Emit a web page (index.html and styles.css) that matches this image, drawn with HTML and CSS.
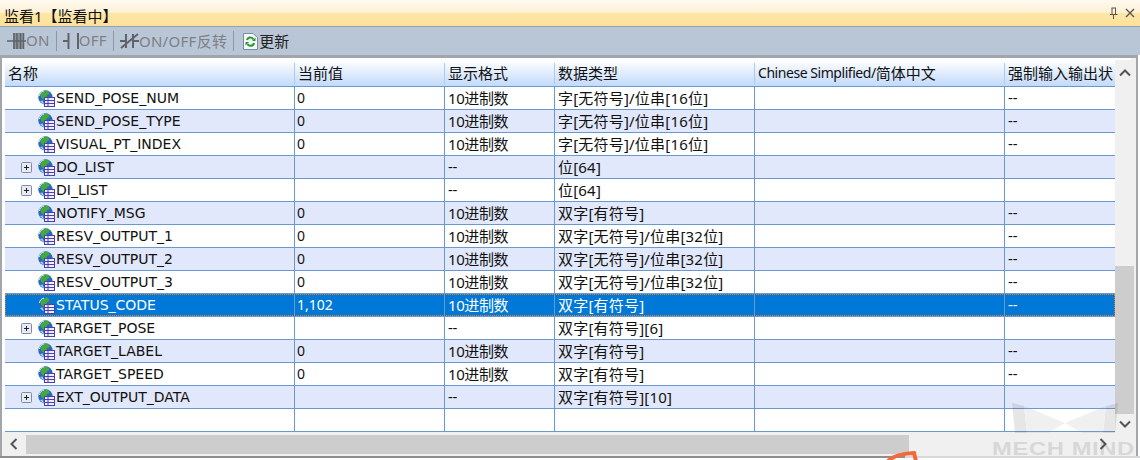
FILE: index.html
```html
<!DOCTYPE html>
<html lang="zh-CN">
<head>
  <meta charset="UTF-8" />
  <title>监看1</title>
  <link rel="stylesheet" href="styles.css">
</head>
<body>
<svg class="defs" width="0" height="0">
  <defs>
    <symbol id="var-icon" viewBox="0 0 17 17">
      <circle cx="7.5" cy="7.5" r="7.2" fill="#2a68c0"/>
      <path d="M2.5 4 C4.5 1 8 0 10.5 1 L11.5 4 L8.5 5.5 L9 8 L5.5 10 L3 7.5 Z" fill="#45a83c"/>
      <path d="M2 11 L4.5 10.5 L6 14 L4.5 13.5 Z" fill="#9fd0f5"/>
      <path d="M1.5 6 C1.5 3.5 3.5 1.5 6 1" fill="none" stroke="#d6ecff" stroke-width="1"/>
      <rect x="6.5" y="7.5" width="10" height="9" fill="#eeecff" stroke="#4a3fb0"/>
      <path d="M6.5 10.5 H16.5 M6.5 13.5 H16.5 M10 7.5 V16.5" stroke="#4a3fb0" stroke-width="1"/>
    </symbol>
    <symbol id="plus-box" viewBox="0 0 11 11">
      <rect x="0.5" y="0.5" width="10" height="10" rx="1" fill="#e6ebf5" stroke="#7f8ba0"/>
      <path d="M3 5.5 H8 M5.5 3 V8" stroke="#222" stroke-width="1"/>
    </symbol>
  </defs>
</svg>

<div class="titlebar">
  <span class="title">监看1【监看中】</span>
  <span class="win-btns">
    <svg width="11" height="12" viewBox="0 0 11 12"><path d="M3.5 1 H8 M4 1 V7 M7.5 1 V7 M2 7.5 H9.5 M5.5 8 V12" fill="none" stroke="#555" stroke-width="1"/></svg>
    <svg width="10" height="10" viewBox="0 0 10 10"><path d="M1 1 L9 9 M9 1 L1 9" stroke="#555" stroke-width="1.3"/></svg>
  </span>
</div>

<div class="toolbar">
  <span class="tool off">
    <svg width="19" height="18" viewBox="0 0 19 18"><rect x="6" y="1" width="10" height="16" fill="#8d929a"/><path d="M0 9 H19 M7 1 V17 M10 1 V17 M13.5 1 V17 M16.5 1 V17" stroke="#5f636a" stroke-width="1.5" fill="none"/></svg><span class="tool-text">ON</span>
  </span>
  <i class="sep"></i>
  <span class="tool off">
    <svg width="16" height="18" viewBox="0 0 16 18"><path d="M0 9 H5 M5.5 1 V17 M15 1 V17" stroke="#5f636a" stroke-width="2" fill="none"/></svg><span class="tool-text">OFF</span>
  </span>
  <i class="sep"></i>
  <span class="tool off">
    <svg width="19" height="18" viewBox="0 0 19 18"><path d="M0 9 H5 M6 2 V16 M13 2 V16 M13 9 H19 M1 16 L18 2" stroke="#5f636a" stroke-width="2" fill="none"/></svg><span class="tool-text">ON/OFF反转</span>
  </span>
  <i class="sep"></i>
  <span class="tool refresh">
    <svg width="15" height="17" viewBox="0 0 15 17"><path d="M0.5 0.5 H10 L14.5 4.5 V16.5 H0.5 Z" fill="#f4f7fb" stroke="#7a8aa8"/><path d="M4 7 A3.5 3.5 0 0 1 10.5 6.5 M11 10 A3.5 3.5 0 0 1 4.5 11" fill="none" stroke="#2b9a2b" stroke-width="2"/><path d="M9 8 H12.5 V4.5 Z M6 9 H2.5 V12.5 Z" fill="#2b9a2b"/></svg><span class="tool-text">更新</span>
  </span>
</div>

<div class="panel">
  <div class="grid-area">
    <div class="grid">
      <div class="row head">
        <div class="cell">名称</div><div class="cell">当前值</div><div class="cell">显示格式</div><div class="cell">数据类型</div><div class="cell"><span class="latin">Chinese Simplified/</span>简体中文</div><div class="cell">强制输入输出状</div>
      </div>
      <div class="row"><div class="cell name"><span class="tg"></span><svg class="vi"><use href="#var-icon"/></svg>SEND_POSE_NUM</div><div class="cell">0</div><div class="cell">10进制数</div><div class="cell">字[无符号]/位串[16位]</div><div class="cell"></div><div class="cell">--</div></div>
      <div class="row alt"><div class="cell name"><span class="tg"></span><svg class="vi"><use href="#var-icon"/></svg>SEND_POSE_TYPE</div><div class="cell">0</div><div class="cell">10进制数</div><div class="cell">字[无符号]/位串[16位]</div><div class="cell"></div><div class="cell">--</div></div>
      <div class="row"><div class="cell name"><span class="tg"></span><svg class="vi"><use href="#var-icon"/></svg>VISUAL_PT_INDEX</div><div class="cell">0</div><div class="cell">10进制数</div><div class="cell">字[无符号]/位串[16位]</div><div class="cell"></div><div class="cell">--</div></div>
      <div class="row alt"><div class="cell name"><svg class="tg"><use href="#plus-box"/></svg><svg class="vi"><use href="#var-icon"/></svg>DO_LIST</div><div class="cell"></div><div class="cell">--</div><div class="cell">位[64]</div><div class="cell"></div><div class="cell"></div></div>
      <div class="row"><div class="cell name"><svg class="tg"><use href="#plus-box"/></svg><svg class="vi"><use href="#var-icon"/></svg>DI_LIST</div><div class="cell"></div><div class="cell">--</div><div class="cell">位[64]</div><div class="cell"></div><div class="cell"></div></div>
      <div class="row alt"><div class="cell name"><span class="tg"></span><svg class="vi"><use href="#var-icon"/></svg>NOTIFY_MSG</div><div class="cell">0</div><div class="cell">10进制数</div><div class="cell">双字[有符号]</div><div class="cell"></div><div class="cell">--</div></div>
      <div class="row"><div class="cell name"><span class="tg"></span><svg class="vi"><use href="#var-icon"/></svg>RESV_OUTPUT_1</div><div class="cell">0</div><div class="cell">10进制数</div><div class="cell">双字[无符号]/位串[32位]</div><div class="cell"></div><div class="cell">--</div></div>
      <div class="row alt"><div class="cell name"><span class="tg"></span><svg class="vi"><use href="#var-icon"/></svg>RESV_OUTPUT_2</div><div class="cell">0</div><div class="cell">10进制数</div><div class="cell">双字[无符号]/位串[32位]</div><div class="cell"></div><div class="cell">--</div></div>
      <div class="row"><div class="cell name"><span class="tg"></span><svg class="vi"><use href="#var-icon"/></svg>RESV_OUTPUT_3</div><div class="cell">0</div><div class="cell">10进制数</div><div class="cell">双字[无符号]/位串[32位]</div><div class="cell"></div><div class="cell">--</div></div>
      <div class="row selected"><div class="cell name"><span class="tg"></span><svg class="vi"><use href="#var-icon"/></svg>STATUS_CODE</div><div class="cell">1,102</div><div class="cell">10进制数</div><div class="cell">双字[有符号]</div><div class="cell"></div><div class="cell">--</div></div>
      <div class="row"><div class="cell name"><svg class="tg"><use href="#plus-box"/></svg><svg class="vi"><use href="#var-icon"/></svg>TARGET_POSE</div><div class="cell"></div><div class="cell">--</div><div class="cell">双字[有符号][6]</div><div class="cell"></div><div class="cell"></div></div>
      <div class="row alt"><div class="cell name"><span class="tg"></span><svg class="vi"><use href="#var-icon"/></svg>TARGET_LABEL</div><div class="cell">0</div><div class="cell">10进制数</div><div class="cell">双字[有符号]</div><div class="cell"></div><div class="cell">--</div></div>
      <div class="row"><div class="cell name"><span class="tg"></span><svg class="vi"><use href="#var-icon"/></svg>TARGET_SPEED</div><div class="cell">0</div><div class="cell">10进制数</div><div class="cell">双字[有符号]</div><div class="cell"></div><div class="cell">--</div></div>
      <div class="row alt"><div class="cell name"><svg class="tg"><use href="#plus-box"/></svg><svg class="vi"><use href="#var-icon"/></svg>EXT_OUTPUT_DATA</div><div class="cell"></div><div class="cell">--</div><div class="cell">双字[有符号][10]</div><div class="cell"></div><div class="cell"></div></div>
      <div class="row"><div class="cell"></div><div class="cell"></div><div class="cell"></div><div class="cell"></div><div class="cell"></div><div class="cell"></div></div>
    </div>
    <div class="vscroll">
      <svg class="arrow up" width="12" height="8" viewBox="0 0 12 8"><path d="M1 6.5 L6 1.5 L11 6.5" fill="none" stroke="#555" stroke-width="2"/></svg>
      <div class="vthumb"></div>
      <svg class="arrow down" width="12" height="8" viewBox="0 0 12 8"><path d="M1 1.5 L6 6.5 L11 1.5" fill="none" stroke="#555" stroke-width="2"/></svg>
    </div>
  </div>
  <div class="hscroll">
    <svg class="arrow" width="8" height="12" viewBox="0 0 8 12"><path d="M6.5 1 L1.5 6 L6.5 11" fill="none" stroke="#555" stroke-width="2"/></svg>
    <div class="hthumb"></div>
    <svg class="arrow" width="8" height="12" viewBox="0 0 8 12"><path d="M1.5 1 L6.5 6 L1.5 11" fill="none" stroke="#555" stroke-width="2"/></svg>
  </div>
</div>
<div class="footer"></div>

<div class="watermark">
  <svg class="wm-logo" width="106" height="30" viewBox="0 0 106 30">
    <path d="M0 0 L12 3 L15 30 L3 30 Z" fill="#555"/>
    <path d="M106 0 L94 3 L91 30 L103 30 Z" fill="#555"/>
    <path d="M12 3 L53 20 L36 30 L15 30 Z M94 3 L53 20 L70 30 L91 30 Z" fill="#999"/>
  </svg>
  <span class="wm-text">MECH MIND</span>
</div>
<svg class="scribble" width="34" height="10" viewBox="0 0 34 10"><path d="M2 11 C8 5 18 3.5 28 3 L30 11" fill="none" stroke="#f26a3a" stroke-width="4"/></svg>
</body>
</html>
```

FILE: styles.css
```css
html, body {
  margin: 0;
  padding: 0;
}
body {
  position: relative;
  width: 1140px;
  height: 460px;
  overflow: hidden;
  background: #fff;
  font-family: "Noto Sans", "Noto Sans CJK SC", sans-serif;
  font-size: 15px;
  color: #111;
}
.defs {
  position: absolute;
}
.titlebar {
  height: 27px;
  box-sizing: border-box;
  display: flex;
  align-items: center;
  justify-content: space-between;
  padding: 0 4px;
  background: linear-gradient(#fffaf0 0%, #fdf0d4 48%, #fee6a6 50%, #fee29a 100%);
  border-bottom: 1px solid #8fa3bd;
}
.title {
  padding-top: 4px;
}
.win-btns {
  display: flex;
  align-items: center;
  gap: 6px;
  margin-right: 1px;
}
.toolbar {
  height: 28px;
  box-sizing: border-box;
  display: flex;
  align-items: center;
  padding: 0 0 0 7px;
  gap: 6px;
  background: #b9c6d6;
}
.tool {
  display: flex;
  align-items: center;
  color: #222;
}
.tool-text {
  padding-bottom: 2px;
}
.tool.off {
  color: #7d8087;
  letter-spacing: 0.3px;
}
.refresh {
  margin-left: 3px;
}
.refresh svg {
  margin-right: 1px;
}
.sep {
  width: 1px;
  height: 20px;
  background: #8c98a8;
}
.panel {
  width: 1138px;
  box-sizing: border-box;
  border: 2px solid #a2a6ac;
  border-top-width: 3px;
  border-bottom: 0;
  background: #fff;
}
.grid-area {
  display: flex;
  padding: 2px 2px 0 3px;
  background: linear-gradient(to right, #fff 1129px, #f0f0f0 1129px);
}
.grid {
  width: 1110px;
  flex: none;
  background: #fff;
}
.row {
  position: relative;
  display: grid;
  grid-template-columns: 290px 150px 110px 200px 250px 110px;
  height: 23px;
  box-sizing: border-box;
  border-bottom: 1px solid #6a98d0;
}
.row.alt {
  background: #e1e8fb;
}
.row.head {
  height: 27px;
  background: linear-gradient(#ffffff, #c2dafa);
}
.cell {
  display: flex;
  align-items: center;
  padding-left: 3px;
  padding-bottom: 2px;
  border-right: 1px solid #6a98d0;
  box-sizing: border-box;
  white-space: nowrap;
  overflow: hidden;
  min-width: 0;
}
.cell:last-child {
  border-right: 0;
}
.head .cell {
  margin: 3px 0 2px;
  border-right-color: #a9cbf2;
}
.latin {
  font-size: 14px;
  letter-spacing: -0.45px;
}
.cell.name {
  padding-left: 16px;
  padding-bottom: 0;
  font-family: "DejaVu Sans", sans-serif;
  font-size: 14px;
}
.row:not(.head) .cell:nth-child(2) {
  padding-left: 2px;
  font-size: 14px;
}
.row:not(.head) .cell:nth-child(3) {
  letter-spacing: -0.4px;
}
.row:not(.head) .cell:nth-child(4) {
  letter-spacing: 0.2px;
}
.tg {
  display: block;
  width: 11px;
  height: 11px;
  margin-right: 6px;
  flex: none;
}
.vi {
  display: block;
  width: 17px;
  height: 17px;
  margin-right: 1px;
  flex: none;
}
.row.selected {
  background: #0078d7;
  color: #fff;
}
.row.selected::after {
  content: "";
  position: absolute;
  inset: 0;
  border: 1px dotted #f08020;
}
.vscroll {
  width: 19px;
  flex: none;
  display: flex;
  flex-direction: column;
  align-items: center;
  background: #f0f0f0;
}
.arrow {
  flex: none;
}
.arrow.up {
  margin-top: 9px;
}
.arrow.down {
  margin-top: 6px;
  margin-bottom: 4px;
}
.vthumb {
  width: 19px;
  height: 148px;
  margin-top: auto;
  background: #cdcdcd;
}
.hscroll {
  display: flex;
  align-items: center;
  height: 24px;
  padding: 0 29px 0 8px;
  background: #f0f0f0;
}
.hthumb {
  height: 19px;
  width: 883px;
  margin: 0 auto 0 8px;
  background: #cdcdcd;
}
.footer {
  height: 2px;
  background: linear-gradient(to right, #8f8f8f 905px, #d8d8d8 905px);
}
.watermark {
  position: absolute;
  left: 992px;
  top: 403px;
  width: 148px;
  opacity: 0.14;
  display: flex;
  flex-direction: column;
  color: #444;
  font-family: "Liberation Sans", sans-serif;
  font-size: 19px;
  font-weight: 700;
  line-height: 20px;
  white-space: nowrap;
}
.wm-logo {
  display: block;
  margin: 0 0 6px 20px;
}
.wm-text {
  display: block;
  letter-spacing: 0.5px;
  transform: scaleX(1.25);
  transform-origin: left center;
}
.scribble {
  position: absolute;
  left: 886px;
  top: 450px;
}
```
